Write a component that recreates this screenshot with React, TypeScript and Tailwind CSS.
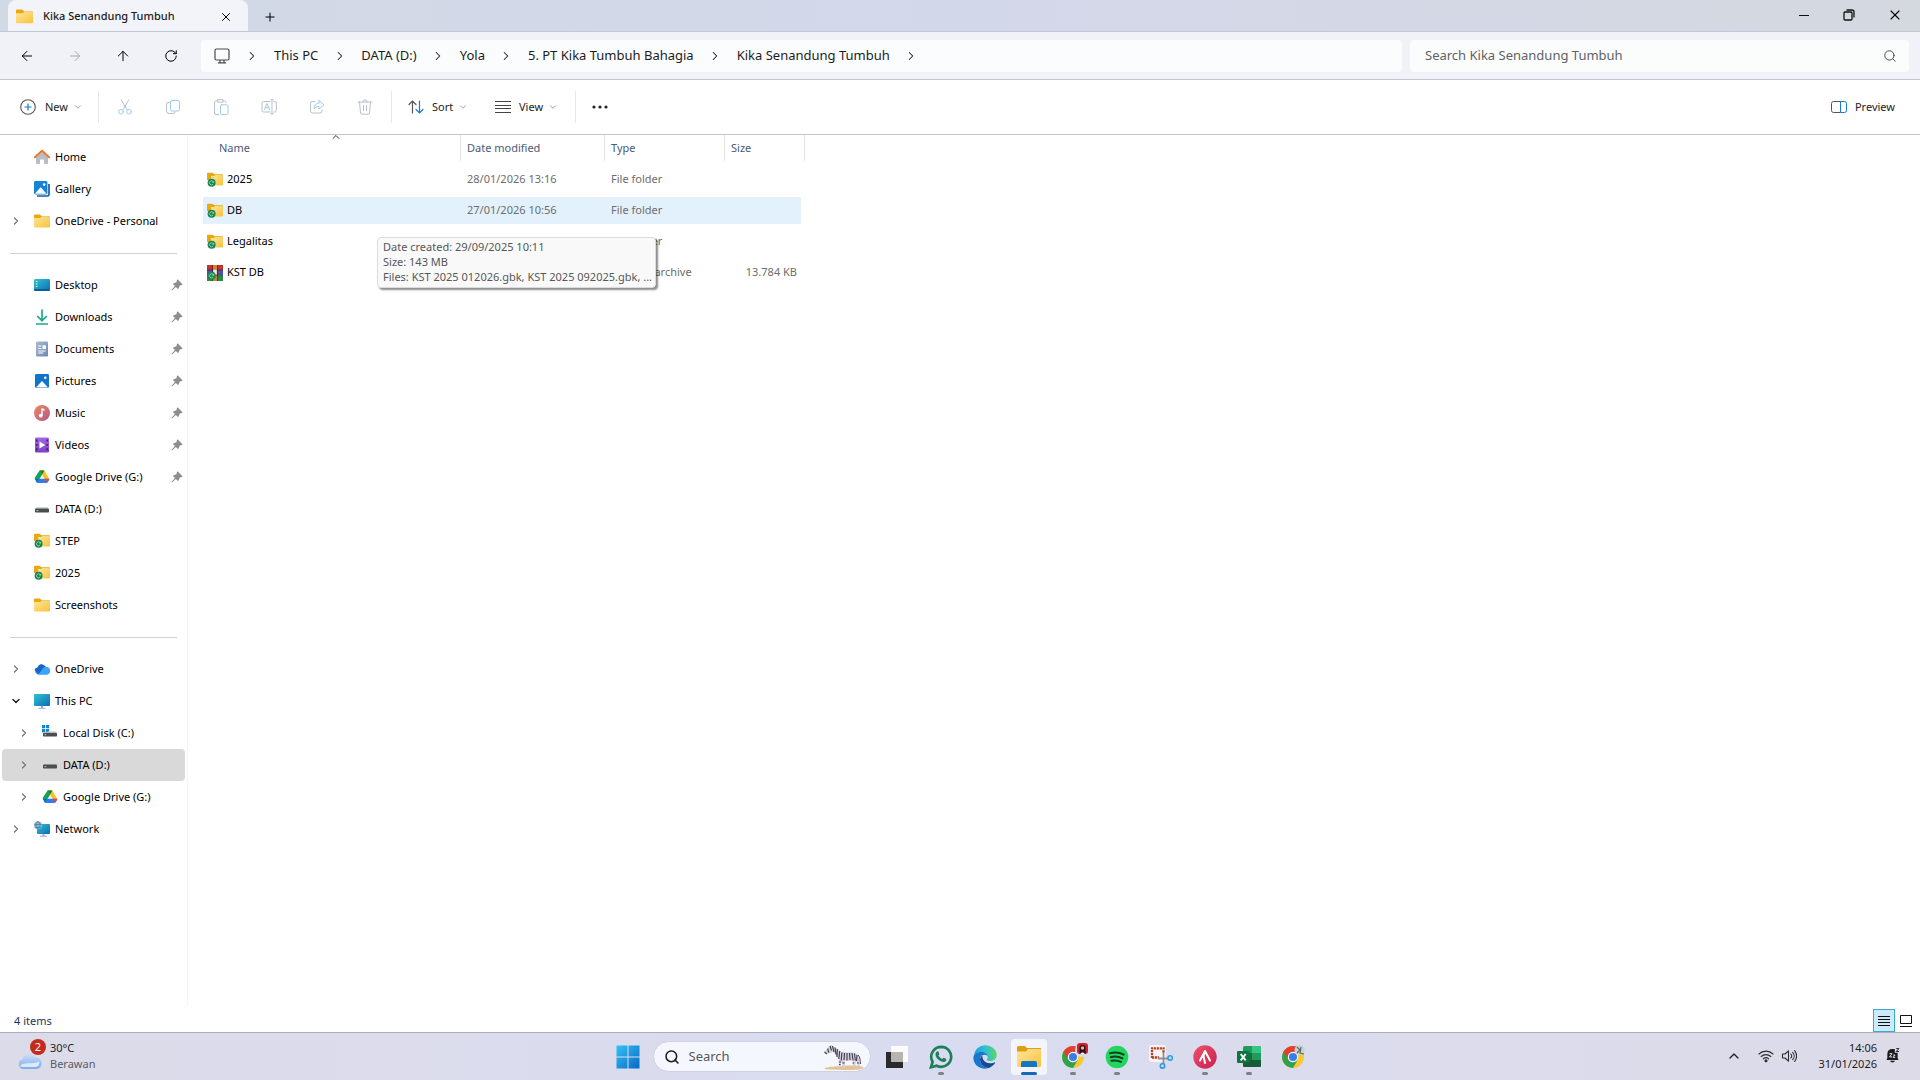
import type { ReactNode } from 'react';
import { ArrowLeft, ArrowRight, ArrowUp, ChevronDown, ChevronRight, ChevronUp, Plus, RotateCw, Search, X } from 'lucide-react';

type IconProps = { className?: string };

/* ---------- Shared gradients ---------- */

function Gradients() {
  return (
    <svg className="absolute h-0 w-0" aria-hidden="true">
      <defs>
        <linearGradient id="folderFront" x1="0" y1="0" x2="1" y2="1">
          <stop offset="0" stopColor="#ffe69a" />
          <stop offset="1" stopColor="#f8c23c" />
        </linearGradient>
        <linearGradient id="blueTeal" x1="0" y1="0" x2="1" y2="1">
          <stop offset="0" stopColor="#2fc3d0" />
          <stop offset="1" stopColor="#0d6cb8" />
        </linearGradient>
        <linearGradient id="winBlue" x1="0" y1="0" x2="1" y2="1">
          <stop offset="0" stopColor="#35c1f5" />
          <stop offset="1" stopColor="#0668c4" />
        </linearGradient>
        <linearGradient id="music" x1="0" y1="0" x2="1" y2="1">
          <stop offset="0" stopColor="#ee8a5b" />
          <stop offset="1" stopColor="#b2558f" />
        </linearGradient>
        <linearGradient id="video" x1="0" y1="0" x2="0" y2="1">
          <stop offset="0" stopColor="#a765e6" />
          <stop offset="1" stopColor="#7c41c4" />
        </linearGradient>
        <linearGradient id="doc" x1="0" y1="0" x2="1" y2="1">
          <stop offset="0" stopColor="#a9bdd6" />
          <stop offset="1" stopColor="#6c86ab" />
        </linearGradient>
        <linearGradient id="cloud" x1="0" y1="0" x2="0" y2="1">
          <stop offset="0" stopColor="#c9defa" />
          <stop offset="1" stopColor="#7fabe6" />
        </linearGradient>
        <linearGradient id="edgeTop" x1="0" y1="0.4" x2="1" y2="0.3">
          <stop offset="0" stopColor="#1e9be0" />
          <stop offset="0.5" stopColor="#2fc0d0" />
          <stop offset="1" stopColor="#62d65c" />
        </linearGradient>
        <linearGradient id="attBg" x1="0" y1="0" x2="1" y2="1">
          <stop offset="0" stopColor="#f0506a" />
          <stop offset="1" stopColor="#c72150" />
        </linearGradient>
      </defs>
    </svg>
  );
}

/* ---------- File and sidebar icons ---------- */

function Folder({ className = 'h-4 w-4' }: IconProps) {
  return (
    <svg viewBox="0 0 16 16" className={className}>
      <path d="M0 2.6C0 2 .5 1.5 1.1 1.5h4.3c.4 0 .7.1 1 .4L7.8 3.3H15c.6 0 1 .4 1 1V9H0Z" fill="#e9a713" />
      <path d="M0 5.8c0-.5.4-.9.9-.9h5c.4 0 .7-.1 1-.4l.7-.6c.2-.2.5-.3.8-.3H15c.6 0 1 .4 1 1v8.8c0 .6-.4 1-1 1H1c-.6 0-1-.4-1-1Z" fill="url(#folderFront)" />
    </svg>
  );
}

function SyncBadge() {
  return (
    <>
      <circle cx="4.6" cy="10.8" r="4" fill="#168753" />
      <path d="M6.2 9.8A2 2 0 1 0 6.1 12M6.700 8.900v1.400H5.300" fill="none" stroke="#bfe8cf" strokeWidth="0.7" />
    </>
  );
}

function SyncedFolder() {
  return (
    <svg viewBox="0 0 16 16" className="h-4 w-4">
      <path d="M0 1.6C0 1.1.4.7.9.7h4.8L7.4 2.3H15c.6 0 1 .4 1 1V8H0Z" fill="#e9a713" />
      <path d="M4 4h3.2l1-1H15c.6 0 1 .4 1 1v8.4c0 .6-.4 1-1 1H4Z" fill="url(#folderFront)" />
      <SyncBadge />
    </svg>
  );
}

function Archive() {
  return (
    <svg viewBox="0 0 16 16" className="h-4 w-4">
      <rect width="16" height="5" fill="#c8322f" />
      <rect y="5" width="16" height="5.5" fill="#4a52b5" />
      <rect y="10.5" width="16" height="5.5" fill="#2b8a3e" />
      <rect x="6" width="4" height="16" fill="#c58a2a" />
      <path d="M5.5 0v16M10.5 0v16M0 5h16M0 10.3h16" stroke="#3c1a1a" strokeWidth="0.6" />
      <rect x="6.2" y="4.5" width="3.6" height="5" fill="#ede6d2" />
      <SyncBadge />
    </svg>
  );
}

function HomeIcon() {
  return (
    <svg viewBox="0 0 16 16" className="h-4 w-4">
      <path d="M2 7.5 8 2l6 5.5v7c0 .3-.2.5-.5.5H10v-4.5H6V15H2.5c-.3 0-.5-.2-.5-.5Z" fill="#b9bec6" />
      <path d="M.9 8.3 8 1.6l7.1 6.7" fill="none" stroke="#e8762c" strokeWidth="1.9" strokeLinecap="round" strokeLinejoin="round" />
    </svg>
  );
}

function GalleryIcon() {
  return (
    <svg viewBox="0 0 16 16" className="h-4 w-4">
      <path d="M15 3v10.5c0 .8-.7 1.5-1.5 1.5H3" fill="none" stroke="#155fa8" strokeWidth="1.7" />
      <rect width="13.4" height="13.4" rx="1.4" fill="#1583d6" />
      <path d="m.8 12.8 5.4-6.1c.3-.3.7-.3 1 0l5.4 6.1Z" fill="#fff" />
      <circle cx="10.2" cy="3.6" r="1.3" fill="#fff" />
    </svg>
  );
}

function DesktopIcon() {
  return (
    <svg viewBox="0 0 16 16" className="h-4 w-4">
      <rect y="2" width="16" height="12" rx="1.2" fill="url(#blueTeal)" />
      <path d="M2 4.5h1.4M2 7h1.4M2 9.5h1.4" stroke="#fff" strokeWidth="1.2" />
      <path d="M0 12h16v.8c0 .7-.5 1.2-1.2 1.2H1.2C.5 14 0 13.5 0 12.8Z" fill="#0b5f9d" />
    </svg>
  );
}

function DownloadsIcon() {
  return (
    <svg viewBox="0 0 16 16" className="h-4 w-4" fill="none" stroke="#1fa88c" strokeWidth="1.7">
      <path d="M8 .5v11M3.2 7 8 11.7 12.8 7M2 15h12" />
    </svg>
  );
}

function DocumentsIcon() {
  return (
    <svg viewBox="0 0 16 16" className="h-4 w-4">
      <rect x="2" y=".5" width="12" height="15" rx="1.2" fill="url(#doc)" />
      <path d="M4.3 5h3M4.3 7.5h3M4.3 10h7.4M4.3 12h5" stroke="#fff" strokeWidth="1.1" />
      <rect x="8.5" y="4.3" width="3.4" height="3.8" fill="#fff" />
    </svg>
  );
}

function PicturesIcon() {
  return (
    <svg viewBox="0 0 16 16" className="h-4 w-4">
      <rect x="1" y="1" width="14" height="14" rx="1.4" fill="#1274c8" />
      <path d="m2 14.4 5.5-6c.3-.3.7-.3 1 0l5.5 6Z" fill="#fff" />
      <circle cx="11.3" cy="4.7" r="1.3" fill="#fff" />
    </svg>
  );
}

function MusicIcon() {
  return (
    <svg viewBox="0 0 16 16" className="h-4 w-4">
      <circle cx="8" cy="8" r="8" fill="url(#music)" />
      <path d="M8 3.5v7M8 4l2.6 1" stroke="#fff" strokeWidth="1.4" />
      <circle cx="6.7" cy="10.7" r="1.9" fill="#fff" />
    </svg>
  );
}

function VideosIcon() {
  return (
    <svg viewBox="0 0 16 16" className="h-4 w-4">
      <rect x="1" y=".5" width="14" height="15" rx="1.2" fill="url(#video)" />
      <path d="M2.8 2.5v11.5M13.2 2.5v11.5" stroke="#43207c" strokeWidth="1.7" strokeDasharray="1.9 2.5" />
      <path d="M5.5 4.6v6.8L11.3 8Z" fill="#fff" />
    </svg>
  );
}

function GoogleDriveIcon() {
  return (
    <svg viewBox="0 0 16 16" className="h-4 w-4">
      <path d="M5.6 1.6h4.8L8 5.7 3.2 14 .9 10c-.3-.5-.3-1 0-1.5Z" fill="#10a65a" />
      <path d="M5.6 1.6h4.8l4.7 8.1h-4.8L8 5.7Z" fill="#fcc31e" />
      <path d="M5.6 1.6h4.8L8 5.7Z" fill="#0b8443" />
      <path d="M5.6 9.7h9.5c.2.3.1.7 0 1l-1.5 2.6c-.3.4-.7.7-1.2.7H3.2Z" fill="#2f7cf0" />
      <path d="M10.3 9.7h4.8c.2.3.1.7 0 1l-1.7 2.9Z" fill="#e8453a" />
      <path d="M.9 9.9 3.2 14l2.4-4.3Z" fill="#1b62d4" />
    </svg>
  );
}

function DriveIcon() {
  return (
    <svg viewBox="0 0 16 16" className="h-4 w-4">
      <path d="M2.5 6h11l1.5 2H1Z" fill="#d5d7d9" />
      <rect x="1" y="7.6" width="14" height="4" rx=".8" fill="#4a4e52" />
      <rect x="2.5" y="9.2" width="1.8" height="1" fill="#8fe0a2" />
    </svg>
  );
}

function SystemDriveIcon() {
  return (
    <svg viewBox="0 0 16 16" className="h-4 w-4">
      <path d="M0 0h3.2v3.2H0ZM4 0h3.2v3.2H4ZM0 4h3.2v3.2H0ZM4 4h3.2v3.2H4Z" fill="#1382d4" />
      <path d="M7 6.3h7l1 1.5H2Z" fill="#d5d7d9" />
      <rect x="1" y="7.7" width="14" height="3.8" rx=".8" fill="#4a4e52" />
      <rect x="2.5" y="9.2" width="1.8" height="1" fill="#8fe0a2" />
    </svg>
  );
}

function OneDriveIcon() {
  return (
    <svg viewBox="0 0 16 16" className="h-4 w-4">
      <path d="M3.6 6.5A4.5 4.5 0 0 1 11.9 6 4 4 0 0 1 16 9.8 3.7 3.7 0 0 1 12.3 13.4H3.8A3.6 3.6 0 0 1 3.6 6.5Z" fill="#1a86e8" />
      <path d="M.4 9A3.6 3.6 0 0 1 3.6 6.5 4.5 4.5 0 0 1 8 3.2L11.8 6 5 12.5Z" fill="#1765c9" />
      <path d="M11.9 6A4 4 0 0 1 16 9.8 3.7 3.7 0 0 1 12.3 13.4H4.5L9 7.2A4 4 0 0 1 11.9 6Z" fill="#3aa6f7" />
    </svg>
  );
}

function PcIcon() {
  return (
    <svg viewBox="0 0 16 16" className="h-4 w-4">
      <rect y="1" width="16" height="12" rx="1" fill="url(#blueTeal)" />
      <path d="M7 13h2v2H7ZM4.5 14.7h7v1h-7Z" fill="#9aa9d6" />
    </svg>
  );
}

function NetworkIcon() {
  return (
    <svg viewBox="0 0 16 16" className="h-4 w-4">
      <rect x="3" y="3" width="13" height="10" rx="1" fill="url(#blueTeal)" />
      <path d="M8.5 13h2v2h-2ZM6 14.7h7v1H6Z" fill="#9aa9d6" />
      <circle cx="4" cy="4.2" r="4" fill="#8fb3c8" />
      <path d="M.3 3.5h7.4M1 6.5h6M4 .2c-2.6 2.5-2.6 5.5 0 8M4 .2c2.6 2.5 2.6 5.5 0 8" fill="none" stroke="#3a7fa5" strokeWidth=".7" />
    </svg>
  );
}

function PinIcon() {
  return (
    <svg viewBox="0 0 12 12" className="h-3 w-3" fill="#8a8e91">
      <path d="M7 .7 11.3 5c.3.3.1.9-.3 1L8.8 6.6 7.2 10.3 4.9 8 1 11.6.4 11 4 7.1 1.7 4.8 5.4 3.2 6 1C6.1.6 6.7.4 7 .7Z" />
    </svg>
  );
}

/* ---------- Toolbar icons ---------- */

function ToolSvg({ children }: { children: ReactNode }) {
  return (
    <svg viewBox="0 0 16 16" className="h-4 w-4" fill="none" stroke="#b9bfc8" strokeWidth="1" strokeLinecap="round" strokeLinejoin="round">
      {children}
    </svg>
  );
}

const fileActions: { label: string; icon: ReactNode }[] = [
  {
    label: 'Cut',
    icon: (
      <ToolSvg>
        <path d="M4.2.8 10 10.8M11.8.8 6 10.8" />
        <g stroke="#9fcbee"><circle cx="4" cy="12.8" r="2.3" /><circle cx="12" cy="12.8" r="2.3" /></g>
      </ToolSvg>
    ),
  },
  {
    label: 'Copy',
    icon: (
      <ToolSvg>
        <path d="M4.500 3.5H3A1.500 1.500 0 0 0 1.5 5v7A2.5 2.5 0 0 0 4 14.5h4.5A1.500 1.500 0 0 0 10 13" />
        <rect x="5.5" y="1.5" width="9" height="10.5" rx="1.5" stroke="#9fcbee" />
      </ToolSvg>
    ),
  },
  {
    label: 'Paste',
    icon: (
      <ToolSvg>
        <path d="M5 2H3A1.5 1.5 0 0 0 1.5 3.5V14A1.5 1.5 0 0 0 3 15.5h3M10 2h1.5A1.5 1.5 0 0 1 13 3.5M5 .6h5v2.6H5Z" />
        <rect x="7.5" y="5.8" width="7.5" height="9.7" rx="1.3" stroke="#9fcbee" />
      </ToolSvg>
    ),
  },
  {
    label: 'Rename',
    icon: (
      <ToolSvg>
        <path d="M9 2.5H2.5A1.5 1.5 0 0 0 1 4v7.5A1.5 1.5 0 0 0 2.5 13H9M13 2.5h.8A1.5 1.5 0 0 1 15.3 4v7.5a1.5 1.5 0 0 1-1.5 1.5H13M11 .8v14M9.8.8h2.4M9.8 14.8h2.4" />
        <path d="M3.5 10.5 6 4.5l2.5 6M4.3 8.7h3.4" stroke="#9fcbee" />
      </ToolSvg>
    ),
  },
  {
    label: 'Share',
    icon: (
      <ToolSvg>
        <path d="M6 2.5H3.5A2 2 0 0 0 1.5 4.5V12a2 2 0 0 0 2 2H11a2 2 0 0 0 2-2v-1" />
        <path d="M10 1.5 15 5.8 10 10V7.5c-2.5 0-4 .8-5 2.5 0-3.5 2-5.7 5-6Z" stroke="#9fcbee" />
      </ToolSvg>
    ),
  },
  {
    label: 'Delete',
    icon: (
      <ToolSvg>
        <path d="M1 3h14M5.8 3a2.2 2.2 0 0 1 4.4 0M2.5 3l1 11c.1.7.6 1.2 1.3 1.2h6.4c.7 0 1.2-.5 1.3-1.2l1-11M6.5 6.5v5M9.5 6.5v5" />
      </ToolSvg>
    ),
  },
];

/* ---------- Taskbar icons ---------- */

function StartIcon() {
  return (
    <svg viewBox="0 0 24 24" className="h-6 w-6" fill="url(#winBlue)">
      <path d="M.5.5h11v11H.5ZM12.5.5h11v11h-11ZM.5 12.5h11v11H.5ZM12.5 12.5h11v11h-11Z" />
    </svg>
  );
}

function Zebra() {
  return (
    <svg viewBox="0 0 42 26" className="h-[26px] w-[42px]">
      <path d="M2 24c8-1.500 30-4 38-1 1.500 1.200-1 2.200-4 2.400-10 .8-26 .6-34-.1Z" fill="#e6c08e" />
      <path d="M1.500 8 6 2.500 8 .8l1.500 1.500c4 .7 6 4 9 5.500 4 1.200 9 .5 13 1 3 .6 4.300 2.800 4.200 5l1.500 10h-1.700l-2.200-7-1.600 7H30l.2-7.500c-3 .8-6 .6-8 0l-.5 8h-1.900l-1-7.500-1.600 7.500h-1.700l.4-9C13.500 13 12.500 9.500 10.500 8L4 10Z" fill="#d2cfdb" />
      <path d="m7 2 1.500 4.500M9.500 2l1.500 6M12 3.500l1 7M14.300 5l-.3 8M16.700 7l-.9 8M19 8.500l-.8 8M21.500 9l-.5 7M24 9v7.500M26.500 9l.5 7M29 9l1 7.500M31.500 9.500l.8 7M34 11l-.5 6M1.500 8l2.300 2M4.700 4.500l1 4M16 18h2M16 20.500h1.500M19.500 19h2M29.500 19h1.500M34 19h2" stroke="#40394f" strokeWidth="1.100" fill="none" />
      <path d="M35 11c2.500 2 2 6 2.500 9" fill="none" stroke="#4a4254" strokeWidth="1" />
    </svg>
  );
}

function TaskViewIcon() {
  return (
    <svg viewBox="0 0 24 24" className="h-6 w-6">
      <rect x="6" y="1" width="17" height="16" fill="#fbfbfb" />
      <rect x="1" y="7" width="17" height="16" fill="#2a2a2c" />
      <rect x="6" y="7" width="12" height="10" fill="#b7b4ae" />
    </svg>
  );
}

function WhatsAppIcon() {
  return (
    <svg viewBox="0 0 24 24" className="h-6 w-6">
      <path d="M12.2 1.8a10 10 0 0 0-8.600 15L2 22.200l5.600-1.500A10 10 0 1 0 12.200 1.800Z" fill="none" stroke="#1f7f58" strokeWidth="2.700" />
      <path d="M8 6.500c.7-.5 1.200-.3 1.500.3l.8 1.900c.2.500-.8 1.300-.8 1.700.8 1.600 2 2.700 3.700 3.500.5 0 1.200-1.300 1.700-1.100l2 1c.6.400.5 1.200.1 1.900-.9 1.400-2.600 1.500-4.600.7-2.700-1-4.700-3.100-5.700-5.500-.6-1.800 0-3.500 1.300-4.400Z" fill="#1f7f58" />
    </svg>
  );
}

function EdgeIcon() {
  return (
    <svg viewBox="0 0 24 24" className="h-6 w-6">
      <path d="M1 10.500C1.800 4.500 6.500.300 12.300.300 18.600.300 23.700 4.800 23.700 10c0 3.700-2.800 6-6.200 6-2.400 0-3.700-.8-3.700-1.600 0-.6 1-1 1-2.900C14.800 9 12 7 8.500 7 5 7 2.300 8.500 1 10.500Z" fill="url(#edgeTop)" />
      <path d="M.4 12.500C.700 9 4 7 8.500 7c3.500 0 6.300 2 6.300 4.500 0 0-1-1.700-3.300-1.700-3.500 0-5 3-4.300 6.200.8 3.700 4 6.700 8.300 7.100-1 .4-2.200.6-3.500.6C5.500 23.700 0 18.700.4 12.500Z" fill="#1677cf" />
      <path d="M9.500 10.300c-2 1.500-2.800 3.300-2.300 5.700.8 3.700 4 6.700 8.300 7.100 2.700-.8 5-2.600 6.500-5 .3-.5-.2-.9-.7-.7-4.500 1.900-9.500.6-11.200-2.900-.7-1.500-.8-3-.6-4.200Z" fill="#124b93" />
    </svg>
  );
}

function ExplorerIcon() {
  return (
    <svg viewBox="0 0 24 24" className="h-6 w-6">
      <path d="M0 2.500C0 1.700.7 1 1.500 1H8l2 2h13c.6 0 1 .4 1 1v5H0Z" fill="#dca012" />
      <path d="M0 6.500h9l2-2.500h12c.6 0 1 .4 1 1v15.500c0 .8-.7 1.500-1.500 1.500h-21C.7 22 0 21.300 0 20.500Z" fill="url(#folderFront)" />
      <path d="M4 18a2 2 0 0 1 2-2h12a2 2 0 0 1 2 2v4H4Z" fill="#1475c5" />
    </svg>
  );
}

function ChromeBase() {
  return (
    <>
      <circle cx="12" cy="13" r="11" fill="#f9c933" />
      <path d="M12 13H2.500V7.500a11 11 0 0 1 19 0V8H12Z" fill="#e0412f" />
      <path d="m2.500 7.500 4.900 8.200L12 13V7.800Z" fill="#e0412f" />
      <path d="m2.500 7.500 5 8.500 4.500 2.500L12 24A11 11 0 0 1 2.500 7.500Z" fill="#2ea24f" />
      <path d="m12 24 4.800-8.300L12 18Z" fill="#2ea24f" />
      <circle cx="12" cy="13" r="5.200" fill="#fff" />
      <circle cx="12" cy="13" r="4.100" fill="#3b7de8" />
    </>
  );
}

function ChromeRedIcon() {
  return (
    <svg viewBox="0 0 32 28" className="h-7 w-8">
      <g transform="translate(4 1)"><ChromeBase /></g>
      <circle cx="25" cy="7" r="7" fill="#d9dbe3" />
      <rect x="20" y="0" width="11" height="11" rx="3" fill="#d21f2b" />
      <path d="M22.500 11V5a3 3 0 0 1 6 0v6Z" fill="#241317" />
      <circle cx="25.500" cy="5" r="1.700" fill="#e5b79a" />
      <path d="M23.500 11c0-2 4-2 4 0Z" fill="#fff" />
    </svg>
  );
}

function ChromeGreyIcon() {
  return (
    <svg viewBox="0 0 32 28" className="h-7 w-8">
      <g transform="translate(4 1)"><ChromeBase /></g>
      <circle cx="22.500" cy="7" r="5" fill="#c7d3cf" />
      <path d="M20 4l3 3-3 3M24 4l-1 6 4 1" fill="none" stroke="#596b68" strokeWidth="1.200" />
    </svg>
  );
}

function SpotifyIcon() {
  return (
    <svg viewBox="0 0 24 24" className="h-6 w-6">
      <circle cx="12" cy="12" r="11.300" fill="#1fd65f" />
      <path d="M5 8.300c4.500-1.300 9.500-.9 13.700 1.300M5.700 12.200c4-1.100 8-.7 11.800 1.200M6.300 15.800c3.300-.8 6.500-.5 9.700 1.100" fill="none" stroke="#143a22" strokeWidth="2" strokeLinecap="round" />
    </svg>
  );
}

function SnipIcon() {
  return (
    <svg viewBox="0 0 24 24" className="h-6 w-6">
      <rect x="0" y="0" width="17" height="17" rx="3" fill="#fbf3f1" />
      <path d="M3 13V3.300h11.500v5" fill="none" stroke="#b5402b" strokeWidth="2.300" strokeDasharray="2.200 .7" />
      <path d="M3 12.500h7" fill="none" stroke="#b5402b" strokeWidth="2.300" strokeDasharray="2.200 .7" />
      <path d="M14.500 7v12M9 13.500h10" stroke="#8b9096" strokeWidth="1.800" />
      <circle cx="21.200" cy="13" r="2.200" fill="none" stroke="#2a9be0" strokeWidth="1.600" />
      <circle cx="13.500" cy="20.900" r="2.200" fill="none" stroke="#2a9be0" strokeWidth="1.600" />
    </svg>
  );
}

function AccurateIcon() {
  return (
    <svg viewBox="0 0 24 24" className="h-6 w-6">
      <circle cx="12" cy="12" r="11.700" fill="url(#attBg)" />
      <path d="M7 15.500 12 6l5 9.500M12 6l-1.500 5L12 18" fill="none" stroke="#fff" strokeWidth="2" strokeLinecap="round" strokeLinejoin="round" />
    </svg>
  );
}

function ExcelIcon() {
  return (
    <svg viewBox="0 0 24 24" className="h-6 w-6">
      <rect x="6" y="1" width="18" height="21" rx="1.500" fill="#1f9b5b" />
      <path d="M6 8h9v7H6Z" fill="#176f41" />
      <path d="M15 1h7.500A1.500 1.500 0 0 1 24 2.500V8h-9Z" fill="#35c481" />
      <path d="M6 15h18v5.500a1.500 1.500 0 0 1-1.500 1.500h-15A1.500 1.500 0 0 1 6 20.500Z" fill="#175c37" />
      <rect x="0" y="6" width="12.500" height="12" rx="1.200" fill="#0f7440" />
      <path d="m3.700 9 5 6.300M8.700 9l-5 6.300" stroke="#fff" strokeWidth="1.900" />
    </svg>
  );
}

function WeatherIcon() {
  return (
    <svg viewBox="0 0 28 30" className="h-[30px] w-7">
      <path d="M6 28a5 5 0 0 1-.5-9.800A6.500 6.500 0 0 1 17.500 16.500 5.800 5.800 0 0 1 20 28Z" fill="url(#cloud)" />
      <path d="M3 25.500C5 20 16 24 22 20.500c1 3-1 5.500-4 5.500H6Z" fill="#dbe9fc" />
    </svg>
  );
}

/* ---------- Data ---------- */

interface NavItem {
  label: string;
  icon: ReactNode;
  pinned?: boolean;
  expand?: 'closed' | 'open';
  nested?: boolean;
  selected?: boolean;
}

const navGroups: NavItem[][] = [
  [
    { label: 'Home', icon: <HomeIcon /> },
    { label: 'Gallery', icon: <GalleryIcon /> },
    { label: 'OneDrive - Personal', icon: <Folder />, expand: 'closed' },
  ],
  [
    { label: 'Desktop', icon: <DesktopIcon />, pinned: true },
    { label: 'Downloads', icon: <DownloadsIcon />, pinned: true },
    { label: 'Documents', icon: <DocumentsIcon />, pinned: true },
    { label: 'Pictures', icon: <PicturesIcon />, pinned: true },
    { label: 'Music', icon: <MusicIcon />, pinned: true },
    { label: 'Videos', icon: <VideosIcon />, pinned: true },
    { label: 'Google Drive (G:)', icon: <GoogleDriveIcon />, pinned: true },
    { label: 'DATA (D:)', icon: <DriveIcon /> },
    { label: 'STEP', icon: <SyncedFolder /> },
    { label: '2025', icon: <SyncedFolder /> },
    { label: 'Screenshots', icon: <Folder /> },
  ],
  [
    { label: 'OneDrive', icon: <OneDriveIcon />, expand: 'closed' },
    { label: 'This PC', icon: <PcIcon />, expand: 'open' },
    { label: 'Local Disk (C:)', icon: <SystemDriveIcon />, expand: 'closed', nested: true },
    { label: 'DATA (D:)', icon: <DriveIcon />, expand: 'closed', nested: true, selected: true },
    { label: 'Google Drive (G:)', icon: <GoogleDriveIcon />, expand: 'closed', nested: true },
    { label: 'Network', icon: <NetworkIcon />, expand: 'closed' },
  ],
];

const crumbs = ['This PC', 'DATA (D:)', 'Yola', '5. PT Kika Tumbuh Bahagia', 'Kika Senandung Tumbuh'];

const files = [
  { name: '2025', date: '28/01/2026 13:16', type: 'File folder', size: '', icon: <SyncedFolder /> },
  { name: 'DB', date: '27/01/2026 10:56', type: 'File folder', size: '', icon: <SyncedFolder />, hovered: true },
  { name: 'Legalitas', date: '', type: 'File folder', size: '', icon: <SyncedFolder /> },
  { name: 'KST DB', date: '', type: 'WinRAR archive', size: '13.784 KB', icon: <Archive /> },
];

const apps: { label: string; icon: ReactNode; running?: boolean; active?: boolean }[] = [
  { label: 'Task View', icon: <TaskViewIcon /> },
  { label: 'WhatsApp', icon: <WhatsAppIcon />, running: true },
  { label: 'Microsoft Edge', icon: <EdgeIcon /> },
  { label: 'File Explorer', icon: <ExplorerIcon />, active: true },
  { label: 'Google Chrome', icon: <ChromeRedIcon />, running: true },
  { label: 'Spotify', icon: <SpotifyIcon />, running: true },
  { label: 'Snipping Tool', icon: <SnipIcon /> },
  { label: 'Accurate', icon: <AccurateIcon />, running: true },
  { label: 'Excel', icon: <ExcelIcon />, running: true },
  { label: 'Chrome profile', icon: <ChromeGreyIcon /> },
];

/* ---------- Sections ---------- */

function TitleBar() {
  return (
    <div className="flex h-8 items-stretch border-b border-[#c3c8d8] bg-linear-to-r from-[#d1d9e4] via-[#d3d7ea] to-[#d4d8df] pl-2">
      <div className="flex w-60 items-center rounded-t-lg bg-[#f3f4f9] pt-0.5 pr-[11px] pl-2">
        <Folder className="h-[17px] w-[17px]" />
        <span className="ml-2.5 flex-1 text-[11px] font-medium text-[#1b1b1b]">Kika Senandung Tumbuh</span>
        <button aria-label="Close tab" className="p-1">
          <X className="h-3.5 w-3.5" strokeWidth={1.7} />
        </button>
      </div>
      <button aria-label="New tab" className="flex w-11 items-center justify-center pt-0.5">
        <Plus className="h-[14px] w-[14px]" strokeWidth={1.8} />
      </button>
      <div className="ml-auto flex items-center pr-0.5 pb-0.5">
        <button aria-label="Minimize" className="flex w-[45px] justify-center">
          <svg viewBox="0 0 12 12" className="h-3 w-3" stroke="#111"><path d="M1 6.5h10" /></svg>
        </button>
        <button aria-label="Restore" className="flex w-[45px] justify-center">
          <svg viewBox="0 0 12 12" className="h-3 w-3" fill="none" stroke="#111" strokeWidth="1.3">
            <rect x="1" y="3" width="8" height="8" rx="1" />
            <path d="M3.5 1H9a2 2 0 0 1 2 2v5.5" />
          </svg>
        </button>
        <button aria-label="Close" className="flex w-[47px] justify-center">
          <X className="h-4 w-4" strokeWidth={1.7} />
        </button>
      </div>
    </div>
  );
}

function AddressRow() {
  return (
    <div className="flex h-12 items-center border-b border-[#c4c4d2] bg-[#f1f2f8] pt-px pr-[11px] pl-[3px]">
      <button aria-label="Back" className="flex w-12 justify-center"><ArrowLeft className="h-4 w-4" strokeWidth={1.5} /></button>
      <button aria-label="Forward" className="flex w-12 justify-center"><ArrowRight className="h-4 w-4 text-[#a9aab0]" strokeWidth={1.5} /></button>
      <button aria-label="Up" className="flex w-12 justify-center"><ArrowUp className="h-4 w-4" strokeWidth={1.5} /></button>
      <button aria-label="Refresh" className="flex w-12 justify-center"><RotateCw className="h-[14px] w-[14px]" strokeWidth={1.7} /></button>

      <nav aria-label="Address" className="ml-1.5 flex h-8 flex-1 items-center rounded-sm bg-[#fbfcfe] pl-[13px] text-[13px] text-[#1c1c1c]">
        <svg viewBox="0 0 16 16" className="h-4 w-4" fill="none" stroke="#4a4a4a" strokeWidth="1.2">
          <rect x="1" y="1" width="14" height="11" rx="1.5" />
          <path d="M6 12v2.5M10 12v2.5M4 14.8h8" />
        </svg>
        <span className="flex w-11 justify-center"><ChevronRight className="h-[14px] w-[14px]" strokeWidth={1.8} /></span>
        {crumbs.map((crumb) => (
          <span key={crumb} className="flex items-center">
            <button className="whitespace-nowrap">{crumb}</button>
            <span className="flex w-[43px] justify-center"><ChevronRight className="h-[14px] w-[14px]" strokeWidth={1.8} /></span>
          </span>
        ))}
      </nav>

      <label className="ml-2 flex h-8 w-[499px] items-center rounded-sm bg-[#fbfdfd] pr-3 pl-[15px]">
        <input
          type="text"
          aria-label="Search this folder"
          placeholder="Search Kika Senandung Tumbuh"
          className="min-w-0 flex-1 bg-transparent text-[13px] outline-none placeholder:text-[#606266]"
        />
        <Search className="h-[14px] w-[14px] text-[#4b4b4b]" strokeWidth={1.7} />
      </label>
    </div>
  );
}

function Toolbar() {
  return (
    <div className="flex h-[55px] items-center border-b border-[#c6c6ca] bg-white text-[11px] text-[#222]">
      <button className="flex w-[98px] items-center pl-5">
        <svg viewBox="0 0 16 16" className="h-4 w-4" fill="none">
          <circle cx="8" cy="8" r="7.3" stroke="#555" strokeWidth="1.1" />
          <path d="M8 4.5v7M4.5 8h7" stroke="#1779cf" strokeWidth="1.2" />
        </svg>
        <span className="ml-[9px]">New</span>
        <ChevronDown className="ml-[5px] h-2.5 w-2.5 text-[#8b8b8b]" />
      </button>
      <span className="h-8 w-px bg-[#e8e8ea]" />
      <div className="flex px-[2px]">
        {fileActions.map((action) => (
          <button key={action.label} aria-label={action.label} disabled className="flex w-12 justify-center">
            {action.icon}
          </button>
        ))}
      </div>
      <span className="h-8 w-px bg-[#e8e8ea]" />
      <button className="flex w-[87px] items-center pl-4">
        <svg viewBox="0 0 16 16" className="h-4 w-4" fill="none" strokeWidth="1.2" strokeLinecap="round">
          <path d="M4.5 14V2M1 5.5 4.5 2 8 5.5" stroke="#555" />
          <path d="M11.5 2v12M8 10.5l3.5 3.5 3.5-3.5" stroke="#1779cf" />
        </svg>
        <span className="ml-2">Sort</span>
        <ChevronDown className="ml-[5px] h-2.5 w-2.5 text-[#8b8b8b]" />
      </button>
      <button className="flex w-[96px] items-center pl-4">
        <svg viewBox="0 0 16 16" className="h-4 w-4" stroke="#444" strokeWidth="1"><path d="M0 2.5h16M0 6.5h16M0 9.5h16M0 13.5h16" /></svg>
        <span className="ml-2">View</span>
        <ChevronDown className="ml-[5px] h-2.5 w-2.5 text-[#8b8b8b]" />
      </button>
      <span className="h-8 w-px bg-[#e8e8ea]" />
      <button aria-label="More options" className="flex w-12 justify-center">
        <svg viewBox="0 0 16 4" className="h-1 w-4" fill="#222"><circle cx="2" cy="2" r="1.6" /><circle cx="8" cy="2" r="1.6" /><circle cx="14" cy="2" r="1.6" /></svg>
      </button>
      <button className="ml-auto flex items-center pr-[25px]">
        <svg viewBox="0 0 16 16" className="h-4 w-4" fill="none">
          <path d="M9.5 2.5h-7A2 2 0 0 0 .5 4.5v7a2 2 0 0 0 2 2h7" stroke="#555" />
          <path d="M9.5 2.5h4a2 2 0 0 1 2 2v7a2 2 0 0 1-2 2h-4Z" stroke="#1779cf" />
        </svg>
        <span className="ml-2">Preview</span>
      </button>
    </div>
  );
}

function NavRow({ item }: { item: NavItem }) {
  return (
    <button
      className={`mx-0.5 flex h-8 items-center rounded-sm text-left ${item.nested ? 'pl-4' : 'pl-2'} ${item.selected ? 'bg-[#d9d9d9]' : ''}`}
    >
      <span className="w-3">
        {item.expand === 'closed' && <ChevronRight className="h-3 w-3 text-[#777]" strokeWidth={2.5} />}
        {item.expand === 'open' && <ChevronDown className="h-3 w-3 text-[#222]" strokeWidth={3} />}
      </span>
      <span className="ml-3">{item.icon}</span>
      <span className="ml-[5px] flex-1 whitespace-nowrap">{item.label}</span>
      {item.pinned && <span className="mr-0.5"><PinIcon /></span>}
    </button>
  );
}

function Sidebar() {
  return (
    <aside className="flex w-[188px] shrink-0 flex-col border-r border-[#f5f5f5] pt-1.5 text-[11px] text-black">
      {navGroups.map((group, i) => (
        <div key={i} className="flex flex-col">
          {i > 0 && (
            <div className="flex h-8 items-center pr-[10px] pl-[10px]">
              <hr className="w-full border-[#cfd0d2]" />
            </div>
          )}
          {group.map((item) => <NavRow key={item.label} item={item} />)}
        </div>
      ))}
    </aside>
  );
}

function FileList() {
  const cell = 'h-[31px] border-y-2 border-transparent bg-clip-padding p-0';
  return (
    <main className="relative flex-1 pl-[15px]">
      <table className="w-[602px] table-fixed border-separate border-spacing-0 text-left text-[11px]">
        <colgroup>
          <col className="w-[258px]" />
          <col className="w-36" />
          <col className="w-[120px]" />
          <col className="w-20" />
        </colgroup>
        <thead>
          <tr className="text-[#4b5b75]">
            <th scope="col" className="p-0 pb-[3px] font-normal">
              <div className="relative flex h-[26px] items-center border-r border-[#e2e2e4] pl-4">
                Name
                <ChevronUp className="absolute -top-1 left-[127px] h-3 w-3 text-[#333]" strokeWidth={2} />
              </div>
            </th>
            {['Date modified', 'Type', 'Size'].map((head) => (
              <th key={head} scope="col" className="p-0 pb-[3px] font-normal">
                <div className="flex h-[26px] items-center border-r border-[#e2e2e4] pl-1.5">{head}</div>
              </th>
            ))}
          </tr>
        </thead>
        <tbody className="text-[#6d6d6d]">
          {files.map((file) => {
            const bg = file.hovered ? 'bg-[#e3f1fd]' : '';
            return (
              <tr key={file.name}>
                <td className={`${cell} ${bg}`}>
                  <div className="flex items-center pl-1 text-black">
                    {file.icon}
                    <span className="ml-1">{file.name}</span>
                  </div>
                </td>
                <td className={`${cell} ${bg}`}><span className="ml-1.5">{file.date}</span></td>
                <td className={`${cell} ${bg}`}><span className="ml-1.5 whitespace-nowrap">{file.type}</span></td>
                <td className={`${cell} ${bg} border-r-4 text-right`}><span className="mr-1">{file.size}</span></td>
              </tr>
            );
          })}
        </tbody>
      </table>

      {/* Hover tooltip over the DB folder */}
      <div
        role="tooltip"
        className="absolute top-[102px] left-[189px] w-[279px] rounded-sm border border-[#dcdcdc] bg-[#f9f9f9] px-[5px] pt-px pb-[3px] text-[11px] leading-[15px] whitespace-nowrap text-[#575757] shadow-[2px_2px_2px_rgba(0,0,0,0.45)]"
      >
        <p>Date created: 29/09/2025 10:11</p>
        <p>Size: 143 MB</p>
        <p>Files: KST 2025 012026.gbk, KST 2025 092025.gbk, ...</p>
      </div>
    </main>
  );
}

function StatusBar() {
  return (
    <div className="flex h-[26px] items-end justify-between pr-[3px] pl-[14px]">
      <span className="pb-[3px] text-[11px] text-[#1f3255]">4 items</span>
      <div className="flex">
        <button aria-label="Details view" className="flex h-[23px] w-[22px] items-center justify-center border border-[#3aa9cf] bg-[#cdeafa]">
          <svg viewBox="0 0 12 12" className="h-3 w-3" stroke="#111"><path d="M0 1.5h12M0 4.5h12M0 7.5h12M0 10.5h12" /></svg>
        </button>
        <button aria-label="Large icons view" className="flex h-[23px] w-[22px] items-center justify-center">
          <svg viewBox="0 0 12 12" className="h-3 w-3" fill="none" stroke="#111"><path d="M.5.5h11v8H.5ZM0 11.5h12" /></svg>
        </button>
      </div>
    </div>
  );
}

function Taskbar() {
  return (
    <footer className="grid h-12 grid-cols-[1fr_auto_1fr] items-center border-t border-[#aeafba] bg-linear-to-r from-[#dcdbe9] via-[#d9dcf0] to-[#dddbe8]">
      <button className="flex items-center justify-self-start pb-0.5 pl-[17px] text-left text-[11px] leading-4">
        <span className="relative">
          <WeatherIcon />
          <span className="absolute -top-[2px] left-[13px] flex h-4 w-4 items-center justify-center rounded-full bg-[#c42b1c] text-[11px] text-white">2</span>
        </span>
        <span className="ml-[5px] flex flex-col">
          <span className="text-[#1b1b1f]">30°C</span>
          <span className="text-[#5b5b66]">Berawan</span>
        </span>
      </button>

      <div className="flex items-center">
        <button aria-label="Start" className="flex w-11 justify-center"><StartIcon /></button>
        <label className="mr-1 ml-[3px] flex h-[31px] w-[218px] items-center rounded-full border border-[#cfd0e0] bg-[#f5f7fe] pr-[5px] pl-2.5">
          <Search className="h-4 w-4 text-[#1b1b1b]" strokeWidth={2.3} />
          <input type="text" aria-label="Search" placeholder="Search" className="ml-[9px] w-0 min-w-0 flex-1 bg-transparent text-[13px] outline-none placeholder:text-[#55565c]" />
          <Zebra />
        </label>
        {apps.map((app) => (
          <button key={app.label} aria-label={app.label} className="relative flex h-11 w-11 items-center justify-center">
            {app.active && <span className="absolute top-1 left-1 h-9 w-9 rounded-sm bg-[#f4f5fc]" />}
            <span className="relative">{app.icon}</span>
            {app.active && <span className="absolute bottom-1 h-[3px] w-4 rounded-full bg-[#1269b8]" />}
            {app.running && <span className="absolute bottom-1 h-[3px] w-[6px] rounded-full bg-[#7f7f8b]" />}
          </button>
        ))}
      </div>

      <div className="flex items-center justify-self-end pr-5 pb-0.5">
        <button aria-label="Show hidden icons" className="mr-4"><ChevronUp className="h-4 w-4 text-[#222]" /></button>
        <button aria-label="Network and volume" className="mr-[21px] flex items-center gap-[7px]">
          <svg viewBox="0 0 16 14" className="h-[14px] w-4" fill="none" stroke="#2a2a2e" strokeWidth="1.1" strokeLinecap="round">
            <path d="M1 5a10 10 0 0 1 14 0M3.2 7.5a7 7 0 0 1 9.6 0M5.3 9.8a4 4 0 0 1 5.400 0" />
            <circle cx="8" cy="11.8" r="1" fill="#2a2a2e" />
          </svg>
          <svg viewBox="0 0 16 14" className="h-[14px] w-4" fill="none" stroke="#2a2a2e" strokeWidth="1.1" strokeLinecap="round" strokeLinejoin="round">
            <path d="M1.5 5H4l3.5-3.2v10.4L4 9H1.5ZM9.8 5a3 3 0 0 1 0 4M11.7 3.3a5.5 5.5 0 0 1 0 7.400M13.6 1.7a8 8 0 0 1 0 10.600" />
          </svg>
        </button>
        <button className="flex flex-col items-end text-[11px] leading-4 text-[#1b1b1f]">
          <span>14:06</span>
          <span>31/01/2026</span>
        </button>
        <button aria-label="Notifications" className="ml-2">
          <svg viewBox="0 0 16 16" className="h-[15px] w-[15px]">
            <path d="M2.5 11V6a5 5 0 0 1 5-5h3v4h3v6l1 1.8H1.5ZM5.5 13.6h5c-.4 2.4-4.6 2.4-5 0Z" fill="#1b1b1f" />
            <path d="M4.8 6h2.7L4.8 9.5h2.9M8.7 7.5h2L8.7 10h2.2" fill="none" stroke="#fff" strokeWidth=".9" />
            <path d="M12 .6h2.8L12 3.7h3" fill="none" stroke="#1b1b1f" strokeWidth="1" />
          </svg>
        </button>
      </div>
    </footer>
  );
}

export default function App() {
  return (
    <div className="flex min-h-screen flex-col bg-white font-['Noto_Sans','Open_Sans',sans-serif]">
      <Gradients />
      <TitleBar />
      <AddressRow />
      <Toolbar />
      <div className="flex flex-1">
        <Sidebar />
        <FileList />
      </div>
      <StatusBar />
      <Taskbar />
    </div>
  );
}
